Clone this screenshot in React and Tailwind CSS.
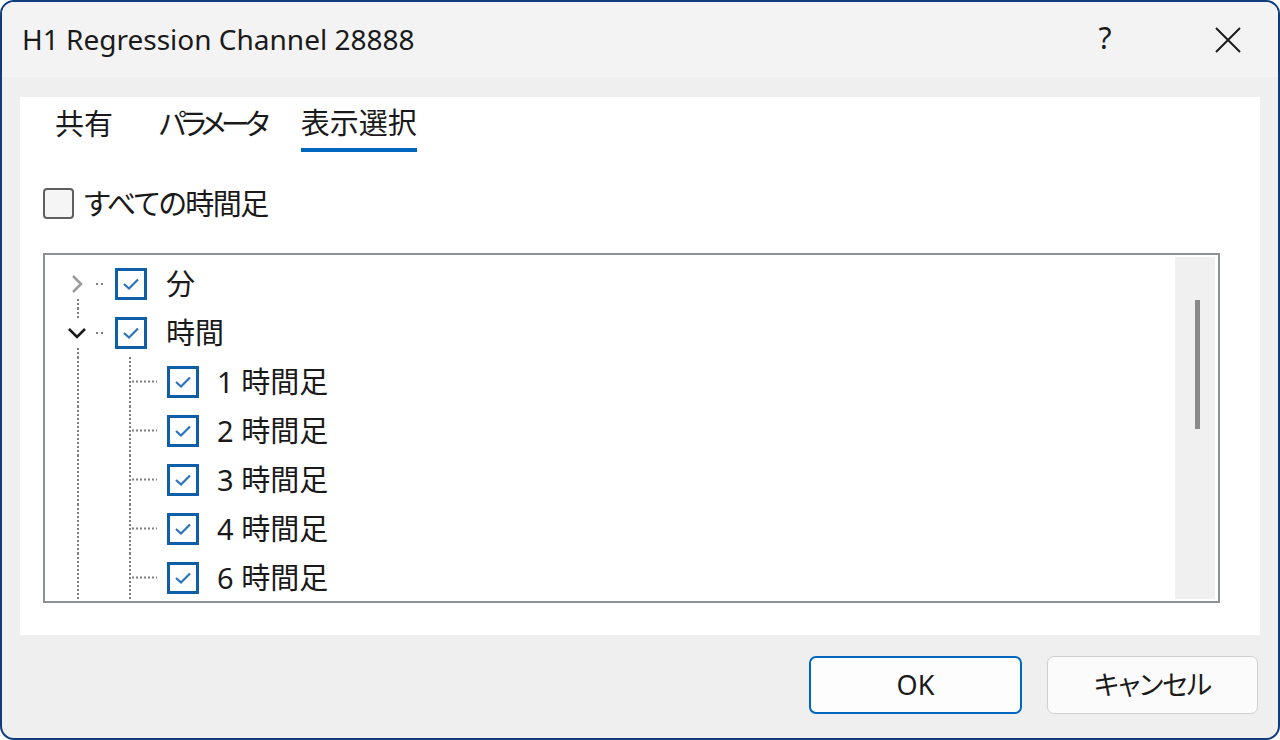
import React from 'react';

const FONT = { fontFamily: '"Noto Sans", "Noto Sans CJK JP", sans-serif' };

const Check = () => (
  <div className="w-[32px] h-[32px] border-[3px] border-[#0f5ea8] bg-white flex items-center justify-center shrink-0">
    <svg width="18" height="12" viewBox="0 0 18 12">
      <path d="M2 6 L7 10.5 L16 1.5" fill="none" stroke="#2b74c0" strokeWidth="2.2" />
    </svg>
  </div>
);

const DOT = '#7f7f7f';

// tree guides for a top level node
const TopGuide = ({ open, lineAbove, lineBelow }) => (
  <svg width="70" height="49" className="shrink-0">
    {open ? (
      <path d="M24 21 L32 29 L40 21" fill="none" stroke="#1a1a1a" strokeWidth="2.5" />
    ) : (
      <path d="M28 17 L36 25 L28 33" fill="none" stroke="#9a9a9a" strokeWidth="2.5" />
    )}
    <rect x="51" y="24" width="2" height="2" fill={DOT} />
    <rect x="56" y="24" width="2" height="2" fill={DOT} />
    {lineAbove && <line x1="33" y1="0" x2="33" y2="12" stroke={DOT} strokeWidth="2" strokeDasharray="2 2" />}
    {lineBelow && <line x1="33" y1="40" x2="33" y2="49" stroke={DOT} strokeWidth="2" strokeDasharray="2 2" />}
    {open && <line x1="85" y1="45" x2="85" y2="49" stroke={DOT} strokeWidth="2" strokeDasharray="2 2" />}
  </svg>
);

const ChildGuide = () => (
  <svg width="122" height="49" className="shrink-0">
    <line x1="33" y1="0" x2="33" y2="49" stroke={DOT} strokeWidth="2" strokeDasharray="2 2" />
    <line x1="85" y1="0" x2="85" y2="49" stroke={DOT} strokeWidth="2" strokeDasharray="2 2" />
    <line x1="87" y1="24.5" x2="112" y2="24.5" stroke={DOT} strokeWidth="2" strokeDasharray="2 2" />
  </svg>
);

const children = ['1', '2', '3', '4', '6'];

export default function App() {
  return (
    <div className="w-[1280px] h-[740px] bg-white" style={FONT}>
      <div className="w-full h-full rounded-[14px] border-2 border-[#0e3c7e] bg-[#efefef] overflow-hidden flex flex-col [font-feature-settings:'palt'] text-[#1a1a1a]">
        {/* title bar */}
        <div className="h-[75px] bg-[#f3f3f3] flex items-center pl-[20px] shrink-0">
          <div className="text-[28px] flex-1 pb-[2px]">H1 Regression Channel 28888</div>
          <div className="text-[30px] w-[40px] text-center mr-[90px] pb-[4px]">?</div>
          <svg width="26" height="26" viewBox="0 0 26 26" className="mr-[37px]">
            <path d="M1 1 L25 25 M25 1 L1 25" stroke="#1a1a1a" strokeWidth="2" />
          </svg>
        </div>

        {/* body */}
        <div className="flex-1 flex flex-col px-[18px] pt-[20px]">
          <div className="h-[538px] bg-white flex flex-col pl-[23px] pr-[40px]">
            {/* tabs */}
            <div className="flex items-end h-[55px] text-[29px] leading-none">
              <div className="ml-[12px] pb-[14px]">共有</div>
              <div className="ml-[46px] pb-[14px] tracking-[-5px]">パラメータ</div>
              <div className="ml-[36px] pb-[11px] border-b-[4px] border-[#0067c0]">表示選択</div>
            </div>

            {/* all timeframes */}
            <div className="flex items-center mt-[35px] h-[32px]">
              <div className="w-[31px] h-[31px] rounded-[4px] border-2 border-[#606060] bg-[#f5f5f5]" />
              <span className="ml-[10px] text-[29px] leading-none tracking-[-1.5px]">すべての時間足</span>
            </div>

            {/* tree */}
            <div className="mt-[34px] h-[350px] border-2 border-[#8c9098] flex overflow-hidden">
              <div className="flex-1 flex flex-col pt-[4px] text-[29px] leading-none">
                <div className="flex items-center h-[49px]">
                  <TopGuide open={false} lineBelow />
                  <Check />
                  <span className="ml-[19px]">分</span>
                </div>
                <div className="flex items-center h-[49px]">
                  <TopGuide open lineAbove lineBelow />
                  <Check />
                  <span className="ml-[19px]">時間</span>
                </div>
                {children.map((n) => (
                  <div key={n} className="flex items-center h-[49px]">
                    <ChildGuide />
                    <Check />
                    <span className="ml-[18px]">{n} 時間足</span>
                  </div>
                ))}
              </div>
              {/* scrollbar */}
              <div className="w-[40px] my-[2px] mr-[3px] bg-[#f0f0f0] flex justify-center pl-[4px]">
                <div className="w-[5px] h-[129px] mt-[43px] bg-[#8a8a8a]" />
              </div>
            </div>
          </div>

          {/* buttons */}
          <div className="flex justify-end gap-[25px] mt-[21px] pr-[2px]">
            <button className="w-[213px] h-[58px] rounded-[7px] border-2 border-[#0067c0] bg-[#fdfdfd] text-[27px]">OK</button>
            <button className="w-[211px] h-[58px] rounded-[7px] border border-[#d0d0d0] bg-[#fbfbfb] text-[27px] tracking-[-1px]">キャンセル</button>
          </div>
        </div>
      </div>
    </div>
  );
}
